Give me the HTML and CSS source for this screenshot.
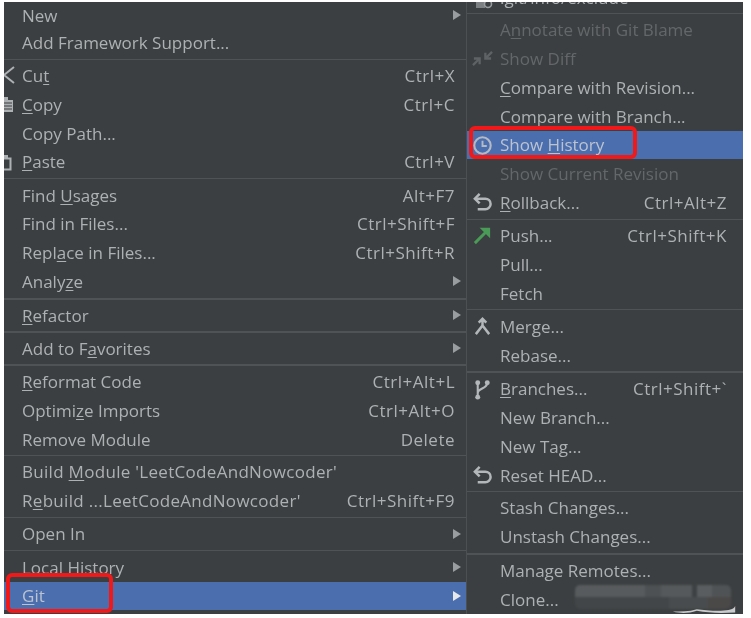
FILE: index.html

```html
<!DOCTYPE html>
<html lang="en">
<head>
  <meta charset="UTF-8">
  <title>Git context menu</title>
  <link rel="stylesheet" href="styles.css">
</head>
<body>
  <div class="menus">
    <div class="menu menu-main">
      <div class="group group-first">
        <div class="row row-first"><span class="label">New</span><span class="arrow"></span></div>
        <div class="row"><span class="label">Add Framework Support...</span></div>
      </div>
      <div class="group">
        <div class="row">
          <svg class="icon icon-edge" viewBox="0 0 18 18"><path d="M15 1 L5 9 L15 17" fill="none" stroke="#aeb1b3" stroke-width="2"/></svg>
          <span class="label">Cu<u>t</u></span><span class="keys">Ctrl+X</span>
        </div>
        <div class="row">
          <svg class="icon icon-edge" viewBox="0 0 18 18"><path d="M2 5h12v12H2zM5 2h4v3H5z" fill="#aeb1b3"/><path d="M5 8h8M5 11h8M5 14h8" stroke="#3c3f41" stroke-width="1"/></svg>
          <span class="label"><u>C</u>opy</span><span class="keys">Ctrl+C</span>
        </div>
        <div class="row"><span class="label">Copy Path...</span></div>
        <div class="row">
          <svg class="icon icon-edge" viewBox="0 0 18 18"><path d="M2.5 5.5h9v11h-9z" fill="none" stroke="#aeb1b3" stroke-width="2"/><path d="M5 2h4v3H5z" fill="#aeb1b3"/></svg>
          <span class="label"><u>P</u>aste</span><span class="keys">Ctrl+V</span>
        </div>
      </div>
      <div class="group">
        <div class="row"><span class="label">Find <u>U</u>sages</span><span class="keys">Alt+F7</span></div>
        <div class="row"><span class="label">Find in Files...</span><span class="keys">Ctrl+Shift+F</span></div>
        <div class="row"><span class="label">Repl<u>a</u>ce in Files...</span><span class="keys">Ctrl+Shift+R</span></div>
        <div class="row"><span class="label">Analy<u>z</u>e</span><span class="arrow"></span></div>
      </div>
      <div class="group thick">
        <div class="row"><span class="label"><u>R</u>efactor</span><span class="arrow"></span></div>
      </div>
      <div class="group thick">
        <div class="row"><span class="label">Add to F<u>a</u>vorites</span><span class="arrow"></span></div>
      </div>
      <div class="group thick">
        <div class="row"><span class="label"><u>R</u>eformat Code</span><span class="keys">Ctrl+Alt+L</span></div>
        <div class="row"><span class="label">Optimi<u>z</u>e Imports</span><span class="keys">Ctrl+Alt+O</span></div>
        <div class="row"><span class="label">Remove Module</span><span class="keys">Delete</span></div>
      </div>
      <div class="group">
        <div class="row"><span class="label wide">Build <u>M</u>odule 'LeetCodeAndNowcoder'</span></div>
        <div class="row"><span class="label wide">R<u>e</u>build ...LeetCodeAndNowcoder'</span><span class="keys">Ctrl+Shift+F9</span></div>
      </div>
      <div class="group">
        <div class="row"><span class="label">Open In</span><span class="arrow"></span></div>
      </div>
      <div class="group">
        <div class="row"><span class="label">Local History</span><span class="arrow"></span></div>
        <div class="row selected"><span class="label"><u>G</u>it</span><span class="arrow arrow-on"></span></div>
      </div>
    </div>

    <div class="menu menu-git">
      <div class="group group-first">
        <div class="row row-cut">
          <svg class="icon icon-top" viewBox="0 0 18 8"><path d="M1 0h9v6H1z" fill="#7d8082"/><circle cx="13" cy="2" r="3.5" fill="none" stroke="#9a9da0" stroke-width="1.6"/></svg>
          <span class="label">.git/info/exclude</span>
        </div>
      </div>
      <div class="group">
        <div class="row off"><span class="label">A<u>n</u>notate with Git Blame</span></div>
        <div class="row off">
          <svg class="icon" viewBox="0 0 22 22"><path d="M21 4 L14 11 M14 5 V11 H20 M1 18 L8 11 M8 17 V11 H2" fill="none" stroke="#5f6264" stroke-width="2.4"/></svg>
          <span class="label">Show Diff</span>
        </div>
        <div class="row"><span class="label"><u>C</u>ompare with Revision...</span></div>
        <div class="row"><span class="label">Compare with Branch...</span></div>
        <div class="row selected">
          <svg class="icon" viewBox="0 0 22 22"><circle cx="11" cy="11" r="8.6" fill="none" stroke="#b4bac4" stroke-width="2.2"/><path d="M11 6v5.5h4.5" fill="none" stroke="#b4bac4" stroke-width="2"/></svg>
          <span class="label">Show <u>H</u>istory</span>
        </div>
        <div class="row off"><span class="label">Show Current Revision</span></div>
        <div class="row">
          <svg class="icon" viewBox="0 0 22 22"><path d="M8 2 L3 7 L8 12" fill="none" stroke="#b4b7b9" stroke-width="2.6"/><path d="M3 7 H14 A5.5 5.5 0 0 1 14 18 H6" fill="none" stroke="#b4b7b9" stroke-width="2.6"/></svg>
          <span class="label"><u>R</u>ollback...</span><span class="keys">Ctrl+Alt+Z</span>
        </div>
      </div>
      <div class="group">
        <div class="row">
          <svg class="icon" viewBox="0 0 22 22"><path d="M3 19 L17 5" stroke="#4a9a58" stroke-width="3" fill="none"/><path d="M8 3 H19 V14 Z" fill="#4a9a58"/></svg>
          <span class="label">Push...</span><span class="keys">Ctrl+Shift+K</span>
        </div>
        <div class="row"><span class="label">Pull...</span></div>
        <div class="row"><span class="label">Fetch</span></div>
      </div>
      <div class="group">
        <div class="row">
          <svg class="icon" viewBox="0 0 22 22"><path d="M11 3 V10 L4 19 M11 10 L18 19 M7 7 L11 3 L15 7" fill="none" stroke="#b4b7b9" stroke-width="2.6"/></svg>
          <span class="label">Merge...</span>
        </div>
        <div class="row"><span class="label">Rebase...</span></div>
      </div>
      <div class="group thick">
        <div class="row">
          <svg class="icon" viewBox="0 0 22 22"><circle cx="6" cy="4" r="2.6" fill="#b4b7b9"/><circle cx="6" cy="19" r="2.6" fill="#b4b7b9"/><circle cx="16" cy="4" r="2.6" fill="#b4b7b9"/><path d="M6 4 V19 M16 4 C16 11 6 9 6 15" fill="none" stroke="#b4b7b9" stroke-width="2.2"/></svg>
          <span class="label"><u>B</u>ranches...</span><span class="keys">Ctrl+Shift+`</span>
        </div>
        <div class="row"><span class="label">New Branch...</span></div>
        <div class="row"><span class="label">New Tag...</span></div>
        <div class="row">
          <svg class="icon" viewBox="0 0 22 22"><path d="M8 2 L3 7 L8 12" fill="none" stroke="#b4b7b9" stroke-width="2.6"/><path d="M3 7 H14 A5.5 5.5 0 0 1 14 18 H6" fill="none" stroke="#b4b7b9" stroke-width="2.6"/></svg>
          <span class="label">Reset HEAD...</span>
        </div>
      </div>
      <div class="group">
        <div class="row"><span class="label">Stash Changes...</span></div>
        <div class="row"><span class="label">Unstash Changes...</span></div>
      </div>
      <div class="group thick">
        <div class="row"><span class="label">Manage Remotes...</span></div>
        <div class="row"><span class="label">Clone...</span></div>
      </div>
      <div class="blur"></div>
      <svg class="scribble" viewBox="0 0 78 10"><path d="M0 7 C12 10 20 9 30 6 C45 9 62 9 78 8 V0 C76 5 70 5 60 6 C45 6 38 5 30 4 C20 7 10 7 0 7 Z" fill="#c9cbcc"/></svg>
    </div>

    <div class="mark mark-history"></div>
    <div class="mark mark-git"></div>
  </div>
</body>
</html>
```

FILE: styles.css

```css
body {
  margin: 0;
  background: #fff;
  font-family: "Open Sans", sans-serif;
  font-size: 17px;
  color: #aeb1b3;
  overflow: hidden;
}
.menus {
  position: relative;
  display: flex;
  width: 739px;
  height: 612px;
  margin: 2px 0 0 4px;
  background: #3c3f41;
}
.menu {
  position: relative;
  overflow: hidden;
  filter: blur(0.3px);
}
.menu-main {
  width: 462px;
  border-right: 1px solid #4d5052;
}
.menu-git {
  flex: 1;
}
.group {
  border-top: 1px solid #505355;
  padding: 1.75px 0;
}
.group.thick {
  border-top: 2px solid #505355;
  padding: 1.25px 0;
}
.group-first {
  border-top: 0;
  padding-top: 0;
}
.row {
  position: relative;
  display: flex;
  align-items: center;
  justify-content: space-between;
  height: 28.75px;
  padding: 0 11px 0 18px;
  white-space: nowrap;
}
.row-first {
  height: 26px;
}
.menu-git .row {
  height: 28.75px;
  padding: 0 16px 0 33px;
}
.menu-git .row-cut {
  height: 7px;
  padding-bottom: 2px;
  align-items: flex-end;
}
.wide {
  letter-spacing: 0.3px;
}
.keys {
  letter-spacing: 0.5px;
}
.off {
  color: #646769;
}
.selected {
  background: #4b6eaf;
  color: #bcc3cf;
}
u {
  text-underline-offset: 2px;
}
.icon {
  position: absolute;
  left: 5px;
  top: 4px;
  width: 21px;
  height: 21px;
}
.icon-edge {
  left: -5px;
  top: 5px;
  width: 18px;
  height: 18px;
}
.icon-top {
  top: 0;
  left: 8px;
  width: 18px;
  height: 8px;
}
.arrow {
  width: 0;
  height: 0;
  margin-right: -6px;
  border-left: 8px solid #9a9da0;
  border-top: 5px solid transparent;
  border-bottom: 5px solid transparent;
}
.arrow-on {
  border-left-color: #e6e8ea;
}
.blur {
  position: absolute;
  left: 108px;
  bottom: 5px;
  width: 156px;
  height: 24px;
  border-radius: 5px;
  background:
    linear-gradient(90deg, #585b5d 0 45%, #4e5153 45% 55%, #56595b 55% 75%, #3e4143 75% 78%, #5a5d5f 78% 88%, #505355 88%) top / 100% 12px no-repeat,
    linear-gradient(90deg, #434648 0 60%, #494c4e 60% 85%, #4b4848 85%) bottom / 100% 12px no-repeat;
  filter: blur(0.8px);
}
.scribble {
  position: absolute;
  right: 0;
  bottom: 0;
  width: 78px;
  height: 8px;
}
.mark {
  position: absolute;
  border: 4px solid #f01818;
  border-radius: 6px;
}
.mark-history {
  left: 465px;
  top: 124px;
  width: 160px;
  height: 25px;
}
.mark-git {
  left: 2px;
  top: 571px;
  width: 99px;
  height: 32px;
}
```
